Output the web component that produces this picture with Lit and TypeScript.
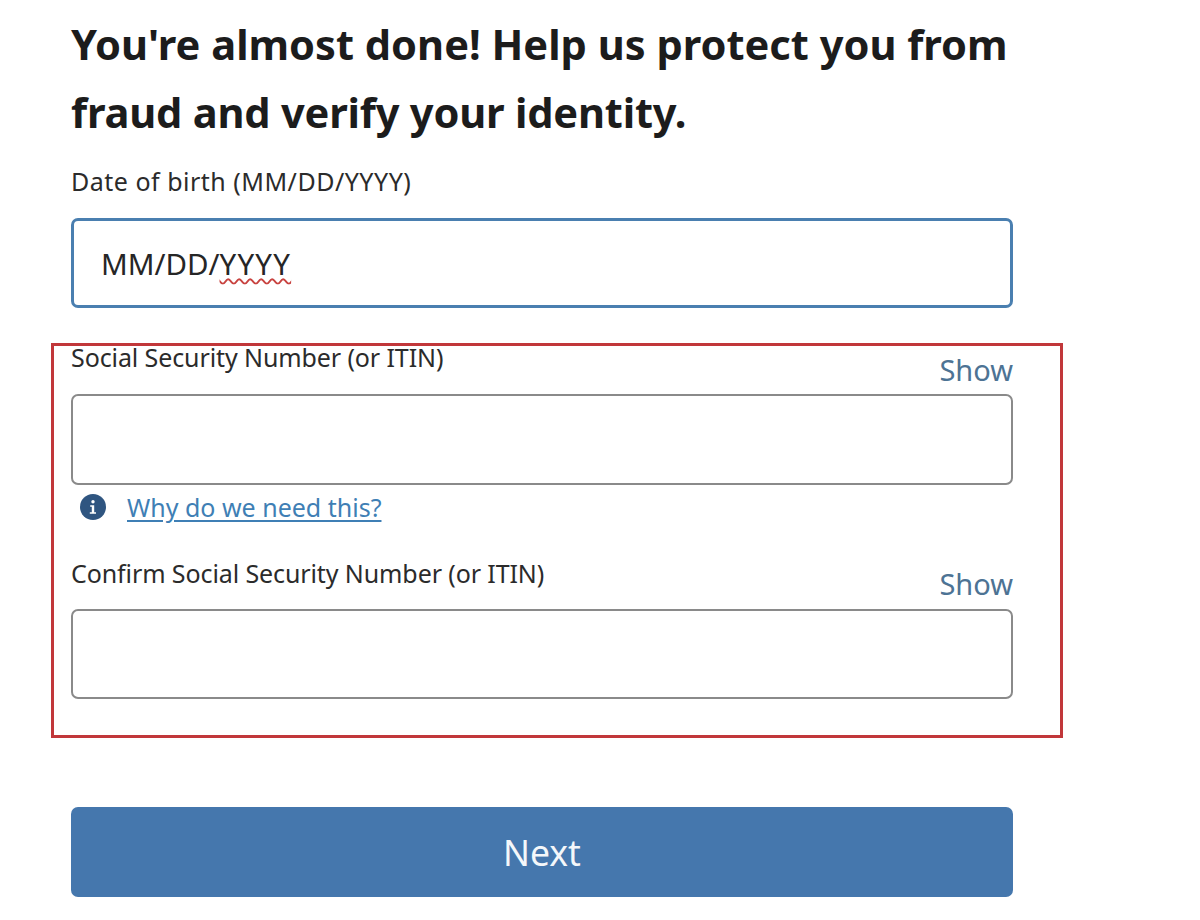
import { LitElement, html, css, svg } from "lit";
import { customElement } from "lit/decorators.js";

@customElement("app-root")
export class AppRoot extends LitElement {
  static styles = css`
    :host {
      display: block;
      width: 1200px;
      height: 920px;
      overflow: hidden;
      background: #fff;
      box-sizing: border-box;
      padding: 10px 0 0 71px;
      font-family: "Noto Sans", "Open Sans", sans-serif;
      color: #2b2b2b;
    }
    .page { width: 942px; display: flex; flex-direction: column; }
    h1 {
      margin: 0;
      font-size: 41.6px;
      line-height: 68px;
      font-weight: 700;
      color: #1c1c1c;
      white-space: nowrap;
    }
    .tight { letter-spacing: -0.2px; }
    .label { font-size: 25px; line-height: 34px; white-space: nowrap; letter-spacing: -0.1px; }
    .dob-label { margin-top: 18px; letter-spacing: 0.5px; }
    .input {
      box-sizing: border-box;
      height: 91px;
      border: 2px solid #8a8a8a;
      border-radius: 7px;
      background: #fff;
    }
    .focus {
      margin-top: 20px;
      height: 90px;
      border: 3px solid #4a7fb0;
      display: flex;
      align-items: center;
      padding: 0 0 0 27px;
      font-size: 29.5px;
      color: #262626;
    }
    .wavy {
      letter-spacing: 1.2px;
      text-decoration: underline wavy #c8423f 1.5px;
      text-underline-offset: 3px;
    }
    .box {
      box-sizing: border-box;
      margin: 35px 0 0 -20px;
      width: 1012px;
      height: 395px;
      border: 3px solid #c1373a;
      padding: 0 47px 0 17px;
      display: flex;
      flex-direction: column;
    }
    .field-head { display: flex; justify-content: space-between; height: 48px; }
    .field-head .label { margin-top: -6px; }
    .show { font-size: 29px; line-height: 40px; color: #4d7394; margin-top: 4px; }
    .help { display: flex; align-items: center; gap: 21px; height: 44px; padding-left: 9px; }
    .help svg { width: 26px; height: 26px; display: block; }
    .help a { font-size: 25px; color: #3f7fb5; text-decoration: underline; text-underline-offset: 3px; }
    .second { margin-top: 32px; }
    .second .label { margin-top: -5px; }
    .second .show { margin-top: 3px; }
    .last { height: 90px; }
    .next {
      margin-top: 69px;
      height: 90px;
      border-radius: 7px;
      background: #4577ad;
      color: #f4f7fa;
      font-size: 35.5px;
      display: flex;
      align-items: center;
      justify-content: center;
    }
  `;

  private infoIcon() {
    return svg`<svg viewBox="0 0 26 26" aria-hidden="true">
      <circle cx="13" cy="13" r="13" fill="#2f5580"></circle>
      <circle cx="13" cy="7.8" r="1.7" fill="#fff"></circle>
      <path d="M10.2 11.2h4v7h1.8v1.6H9.8v-1.6h2v-5.4h-1.6z" fill="#fff"></path>
    </svg>`;
  }

  render() {
    return html`
      <div class="page">
        <h1>You're almost done! Help us protect you from<br /><span class="tight">fraud and verify your identity.</span></h1>
        <div class="label dob-label">Date of birth (MM/DD/YYYY)</div>
        <div class="input focus"><span>MM/DD/<span class="wavy">YYYY</span></span></div>
        <div class="box">
          <div class="field-head">
            <div class="label">Social Security Number (or ITIN)</div>
            <div class="show">Show</div>
          </div>
          <div class="input"></div>
          <div class="help">${this.infoIcon()}<a href="#">Why do we need this?</a></div>
          <div class="field-head second">
            <div class="label">Confirm Social Security Number (or ITIN)</div>
            <div class="show">Show</div>
          </div>
          <div class="input last"></div>
        </div>
        <div class="next">Next</div>
      </div>
    `;
  }
}
